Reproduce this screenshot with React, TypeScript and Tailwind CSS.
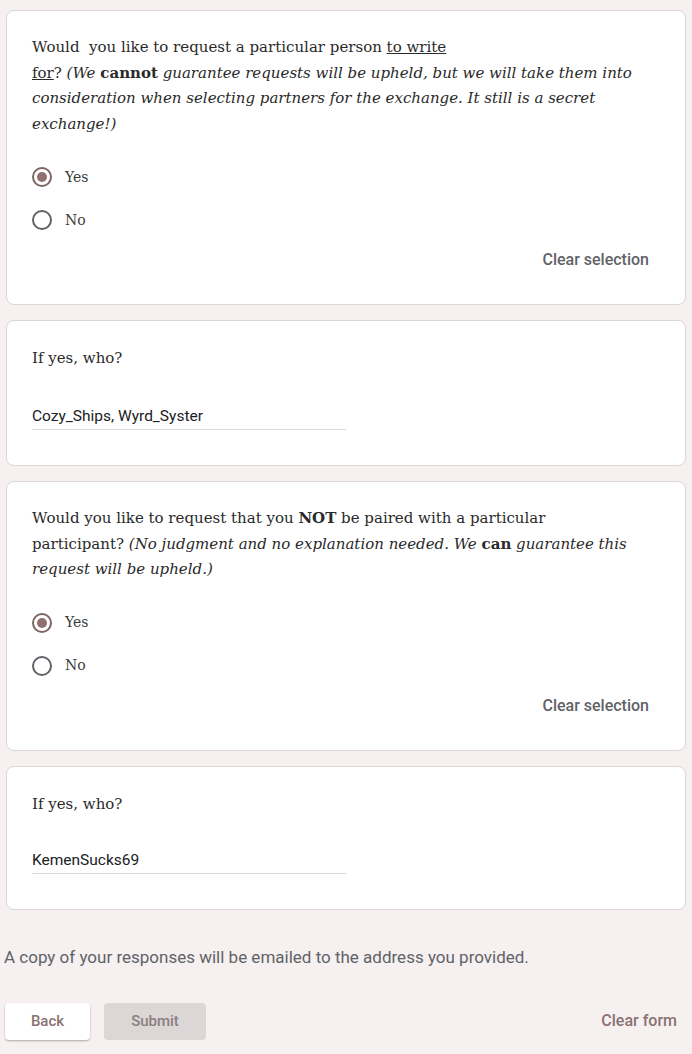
import React from "react"

const serif = "font-['DejaVu_Serif',serif]"
const sans = "font-['Roboto','Liberation_Sans',sans-serif]"

function Radio({ label, checked }: { label: string; checked?: boolean }) {
    return (
        <div className="flex items-center h-[24px] gap-[13px]">
            <span
                className={
                    "w-[20px] h-[20px] rounded-full border-2 flex items-center justify-center " +
                    (checked ? "border-[#7d6565]" : "border-[#5f6368]")
                }
            >
                {checked && <span className="w-[10px] h-[10px] rounded-full bg-[#8f6f6f]" />}
            </span>
            <span className={`${serif} text-[14px] text-[#3c3c3c]`}>{label}</span>
        </div>
    )
}

function ChoiceCard({ children, mt }: { children: React.ReactNode; mt: string }) {
    return (
        <div className="bg-white rounded-lg border border-[#dcd7d7] px-[25px] pt-[24px] pb-[34px]">
            <div className={`${serif} text-[15px] leading-[25.5px] text-[#2a2a2a] whitespace-nowrap`}>{children}</div>
            <div className={`flex flex-col gap-[19px] ${mt}`}>
                <Radio label="Yes" checked />
                <Radio label="No" />
            </div>
            <div className="flex justify-end mt-[18px] mr-[11px]">
                <span className={`${sans} text-[16px] leading-[20px] text-[#5f6368] font-medium`}>Clear selection</span>
            </div>
        </div>
    )
}

function TextCard({ value, mt }: { value: string; mt: string }) {
    return (
        <div className="bg-white rounded-lg border border-[#dcd7d7] px-[25px] pt-[25px] pb-[35px]">
            <div className={`${serif} text-[15px] leading-[25px] text-[#2a2a2a]`}>If yes, who?</div>
            <div className={`w-[314px] border-b border-[#d9d9d9] pb-[2px] ${mt}`}>
                <span className={`${sans} text-[15.5px] leading-[20px] text-[#202124]`}>{value}</span>
            </div>
        </div>
    )
}

export default function App() {
    return (
        <div className="min-h-[1054px] bg-[#f6f0f0] pt-[10px] px-[6px]">
            <div className="flex flex-col gap-[15px]">
                <ChoiceCard mt="mt-[28px]">
                    <span>
                        Would&nbsp; you like to request a particular person <span className="underline">to write</span>
                    </span>
                    <br />
                    <span>
                        <span className="underline">for</span>? <i>(We </i>
                        <b>cannot</b>
                        <i> guarantee requests will be upheld, but we will take them into</i>
                    </span>
                    <br />
                    <i>consideration when selecting partners for the exchange. It still is a secret</i>
                    <br />
                    <i>exchange!)</i>
                </ChoiceCard>
                <TextCard value="Cozy_Ships, Wyrd_Syster" mt="mt-[32px]" />
                <ChoiceCard mt="mt-[28px]">
                    <span>
                        Would you like to request that you <b>NOT</b> be paired with a particular
                    </span>
                    <br />
                    <span>
                        participant? <i>(No judgment and no explanation needed. We </i>
                        <b>can</b>
                        <i> guarantee this</i>
                    </span>
                    <br />
                    <i>request will be upheld.)</i>
                </ChoiceCard>
                <TextCard value="KemenSucks69" mt="mt-[30px]" />
            </div>
            <p className={`${sans} text-[17px] leading-[20px] text-[#5f6368] mt-[37px] -ml-[2px]`}>
                A copy of your responses will be emailed to the address you provided.
            </p>
            <div className="flex items-center mt-[36px] -ml-[1px] mr-[9px]">
                <button className={`${sans} w-[85px] h-[37px] bg-white rounded shadow-[0_1px_2px_rgba(0,0,0,0.3)] text-[15px] font-medium text-[#8a7272]`}>
                    Back
                </button>
                <button className={`${sans} w-[102px] h-[37px] ml-[14px] bg-[#dcd6d6] rounded text-[15px] font-medium text-[#8a7f7f]`}>
                    Submit
                </button>
                <span className={`${sans} ml-auto text-[16px] font-medium text-[#8a7272]`}>Clear form</span>
            </div>
        </div>
    )
}
